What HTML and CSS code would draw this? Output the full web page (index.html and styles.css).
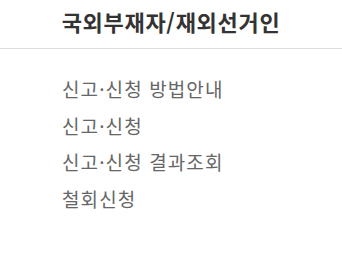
FILE: index.html
```html
<!DOCTYPE html>
<html lang="ko">
<head>
<meta charset="utf-8">
<link rel="stylesheet" href="styles.css">
</head>
<body>
<div class="panel">
  <div class="title">국외부재자/재외선거인</div>
  <ul class="menu">
    <li>신고·신청 방법안내</li>
    <li>신고·신청</li>
    <li>신고·신청 결과조회</li>
    <li>철회신청</li>
  </ul>
</div>
</body>
</html>
```
FILE: styles.css
```css
html, body {
  margin: 0;
  padding: 0;
  background: #fff;
}
.panel {
  width: 342px;
  font-family: "Noto Sans CJK KR", "Noto Sans", sans-serif;
}
.title {
  height: 48px;
  line-height: 43px;
  text-align: center;
  font-size: 22px;
  font-weight: bold;
  color: #333;
  border-bottom: 1px solid #ddd;
  letter-spacing: 0.7px;
}
.menu {
  list-style: none;
  margin: 0;
  padding: 22px 0 0 62px;
}
.menu li {
  font-size: 19px;
  line-height: 36.6px;
  color: #666;
  letter-spacing: 1.1px;
}
```
